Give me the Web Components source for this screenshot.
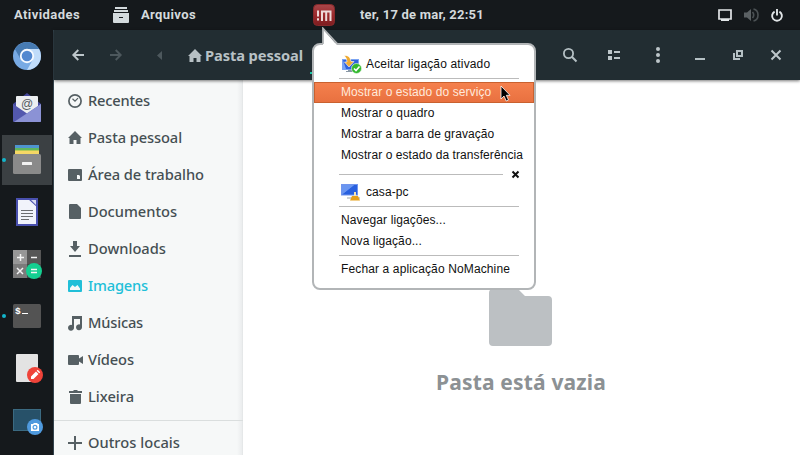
<!DOCTYPE html>
<html lang="pt">
<head>
<meta charset="utf-8">
<title>Arquivos</title>
<style>
html,body{margin:0;width:800px;height:455px;overflow:hidden;background:#fff}
</style>
</head>
<body>
<desktop-shell></desktop-shell>
<script>
const define = (name, html, after) => customElements.define(name, class extends HTMLElement {
  constructor() {
    super();
    const t = document.createElement('template');
    t.innerHTML = html;
    this.attachShadow({mode: 'open'}).append(t.content.cloneNode(true));
  }
  connectedCallback() { if (after) after(this); }
});

/* Single-line label; "w" sets the measured run length through letter spacing. */
define('text-run', `<style>:host{display:inline-block;white-space:pre;flex:none}span{display:inline-block}</style><span><slot></slot></span>`, el => {
  const w = +el.getAttribute('w');
  if (!w) return;
  const s = el.shadowRoot.querySelector('span');
  requestAnimationFrame(() => {
    s.style.letterSpacing = '0';
    const n = el.textContent.length;
    s.style.letterSpacing = ((w - s.getBoundingClientRect().width) / n).toFixed(3) + 'px';
  });
});

const icons = {
  files: [16,16,'<path fill="#d3dadd" d="M2 0h12v2H2zM1 3h14v2H1zM0 6h16v9q0 1-1 1H1q-1 0-1-1z"/><path fill="#161a1d" d="M6 10h4v1H6z"/>'],
  nm: [22,22,'<defs><linearGradient id="g" x2="0" y2="1"><stop stop-color="#a8474a"/><stop offset=".5" stop-color="#9c2a2d"/><stop offset="1" stop-color="#7e1d20"/></linearGradient></defs><rect x=".5" y=".5" width="21" height="21" rx="4" fill="url(#g)" stroke="#87292b"/><path fill="none" stroke="#eed9d9" stroke-width="2" d="M5 6.500v6M5 14.300v2.200M9 17V7.500h8.500V17M13.200 7.500V17"/>'],
  screen: [14,12,'<path fill="none" stroke="#e2e6e8" stroke-width="1.700" d="M1 1h12v9H1z"/><path fill="#e2e6e8" d="M3 10h8v2H3z"/>'],
  sound: [16,14,'<path fill="#5b6164" d="M0 4.500h3L7 1v12L3 9.500H0z"/><path fill="none" stroke="#4b5154" stroke-width="1.600" d="M8.500 4q2.500 3 0 6M9.500 1q4.500 1 4.500 6t-4.500 6"/>'],
  power: [12,13,'<path fill="none" stroke="#e0e4e6" stroke-width="1.900" d="M6 0v6.500M3.600 2.600a4.900 4.900 0 1 0 4.800 0"/>'],
  back: [12,12,'<path fill="none" stroke="#bdc6ca" stroke-width="1.900" d="M12 6H1.500M6.300 1L1.300 6l5 5"/>'],
  fwd: [12,12,'<path fill="none" stroke="#4d585d" stroke-width="1.900" d="M0 6h10.500M5.700 1l5 5-5 5"/>'],
  tri: [5,9,'<path fill="#4d585d" d="M5 0v9L0 4.500z"/>'],
  home: [14,13,'<path fill="currentColor" d="M7 0l7 7h-1.500v6H8.500V9H5.500v4H1.500V7H0z"/>'],
  search: [14,14,'<circle cx="5.500" cy="5.500" r="4.600" fill="none" stroke="#b5c0c4" stroke-width="1.800"/><path stroke="#b5c0c4" stroke-width="2" d="M8.800 8.800l4.700 4.700"/>'],
  list: [12,10,'<path fill="#bdc6ca" d="M0 0h4v4H0zM0 6h4v4H0zM6 1h6v2H6zM6 7h6v2H6z"/>'],
  dots: [4,16,'<g fill="#bdc6ca"><circle cx="2" cy="2" r="2"/><circle cx="2" cy="8" r="2"/><circle cx="2" cy="14" r="2"/></g>'],
  min: [10,10,'<path fill="#b5c0c4" d="M0 8h10v2H0z"/>'],
  max: [10,10,'<path fill="none" stroke="#b5c0c4" stroke-width="2" d="M4 1h5v5H4zM1 3v6h6"/>'],
  close: [10,10,'<path stroke="#bdc6ca" stroke-width="2" d="M.5.5l9 9M9.500.5l-9 9"/>'],
  clock: [14,14,'<circle cx="7" cy="7" r="6.100" fill="none" stroke="#566064" stroke-width="1.700"/><path fill="none" stroke="#566064" stroke-width="1.200" d="M4.500 4.800L7 7.200l3-3"/>'],
  desk: [14,12,'<rect width="14" height="12" rx="1" fill="#566064"/><path fill="#f6f8f8" d="M9 6h2l1 1v3H9z"/>'],
  doc: [12,15,'<path fill="#566064" d="M1 0h7l4 4v10q0 1-1 1H1q-1 0-1-1V1q0-1 1-1z"/>'],
  down: [12,16,'<path fill="#566064" d="M4 0h4v5h3L6 11 1 5h3zM0 14h12v2H0z"/>'],
  image: [14,12,'<rect width="14" height="12" rx="1" fill="#21bfd8"/><path fill="#f6f8f8" d="M2 10V8l2.500-3L7 7l2.500-2L12 8.500V10z"/>'],
  music: [14,14,'<path fill="#566064" d="M4 0h10v11a3 3 0 1 1-2-2.500V3H6v8.500A3 3 0 1 1 4 9z"/>'],
  video: [15,10,'<path fill="#566064" d="M1 0h9q1 0 1 1v2.500L15 1v8l-4-2.500V9q0 1-1 1H1Q0 10 0 9V1q0-1 1-1z"/>'],
  trash: [13,14,'<path fill="#566064" d="M4.500 0h4v1H13v2H0V1h4.500zM1 4h11v9q0 1-1 1H2q-1 0-1-1z"/>'],
  plus: [14,14,'<path fill="#566064" d="M6 0h2v6h6v2H8v6H6V8H0V6h6z"/>'],
  chromium: [28,28,'<circle cx="14" cy="14" r="14" fill="#78aae4"/><path fill="#477bb3" d="M1.900 7A14 14 0 0 1 26.100 7H14L7.500 17z"/><path fill="#c0dcfa" d="M26.100 7A14 14 0 0 1 14 28l6-10.500Q22 12 14 7z"/><circle cx="14" cy="14" r="7.200" fill="#f5f9ff"/><circle cx="14" cy="14" r="5.300" fill="#5288d0"/>'],
  mail: [28,29,'<path fill="#43479b" d="M0 11L14 0l14 11v9H0z"/><rect x="3" y="3" width="22" height="20" rx="1" fill="#eceff1"/><path fill="#5358ae" d="M0 11l14 9.500L28 11v17q0 1-1 1H1q-1 0-1-1z"/><path fill="#8b92d5" d="M28 11v17q0 1-1 1H1z"/><text x="14" y="15" text-anchor="middle" font-family="Liberation Sans" font-size="12" fill="#555b5f">@</text>'],
  cabinet: [28,29,'<path fill="#4f94cf" d="M2 0h24v4H2z"/><path fill="#5fb65e" d="M2 3h24v4H2z"/><path fill="#b4c954" d="M2 5h24v2H2z"/><path fill="#f5d765" d="M2 6h24v4H2z"/><rect y="9" width="28" height="20" rx="1.500" fill="#8a8a8a"/><rect x="9" y="17" width="10" height="3" rx=".5" fill="#f2f2f2"/>'],
  writer: [22,28,'<path fill="#f1f3fb" stroke="#4950ae" stroke-width="2" d="M1 1h20v26H1z"/><path fill="#4950ae" d="M11 0h11v10z"/><path fill="#d7daf0" d="M15 2h5v5z"/><path stroke="#6b6d72" d="M5 12.500h12M5 15.500h12M5 18.500h12M5 21.500h8"/>'],
  calc: [29,29,'<path fill="#979797" d="M0 0h14v14H0z"/><path fill="#565656" d="M14 0h14v14H14z"/><path fill="#7b7b7b" d="M0 14h14v14H0z"/><path fill="#484848" d="M14 14h14v14H14z"/><circle cx="21" cy="21" r="8" fill="#14cf91"/><path stroke="#f4f4f4" stroke-width="1.500" d="M4 7.500h7M7.500 4v7M18 7.500h6M4 18l6 6M10 18l-6 6M18 19.500h6M18 22.500h6"/>'],
  term: [28,24,'<rect width="28" height="24" rx="1.500" fill="#535353"/><text x="2" y="10" font-family="Liberation Mono" font-weight="bold" font-size="9.500" fill="#fff">$</text><path fill="#fff" d="M9 9h6v1H9z"/>'],
  edit: [27,29,'<rect width="22" height="28" rx="1" fill="#e3e3e3"/><circle cx="19" cy="21" r="8" fill="#ef4339"/><path fill="#fff" d="M15 25v-2.500l5-5 2.500 2.500-5 5zM20.700 16.800l1-1 2.500 2.500-1 1z"/>'],
  shot: [30,26,'<rect x=".5" y=".5" width="27" height="21" fill="#275169" stroke="#3b6a81"/><circle cx="22" cy="18" r="8" fill="#4f9ade"/><path fill="#fff" d="M18 15h2l1-1h3l1 1h1v7h-8z"/><circle cx="22" cy="18.300" r="1.900" fill="none" stroke="#4f9ade" stroke-width="1.200"/>'],
  accept: [21,19,'<rect x="1" y="4" width="17" height="11" fill="#7ba4f2"/><path fill="#2f62dd" d="M2 5h15v9H5z"/><path fill="#8a98a6" d="M7 15h5v1h2v1H5v-1h2z"/><path fill="#efaa31" stroke="#fff" stroke-width=".6" d="M3 .5q6-1 7 6h3L8 12 3.500 7H6Q6 3 3 .5z"/><circle cx="15.500" cy="13.500" r="5" fill="#31b82d" stroke="#dcf3dc" stroke-width=".7"/><path fill="none" stroke="#fff" stroke-width="1.600" d="M13 13.500l2 2 3.500-4"/>'],
  pc: [20,17,'<rect width="17" height="11.500" fill="#7195ed"/><path fill="#2860df" d="M1 10.500L13 1h3v9.500z"/><path fill="#6a96f1" d="M1 1h12L1 10.500z"/><path fill="#9aa2aa" d="M6 13.500h13v1H6z"/><path fill="#f7e6b5" d="M13 8h2v4h-2z"/><path fill="#e6a11c" d="M11 12h6l2 4.500H9z"/>'],
  x: [7,7,'<path stroke="#111" stroke-width="2" d="M.5.5l6 6M6.500.5l-6 6"/>'],
  folder: [64,64,'<path fill="#bcc0c3" d="M4 0h25l7 7h23q4 0 4 4v42q0 4-4 4H4q-4 0-4-4V4q0-4 4-4z"/>'],
  cursor: [10,17,'<path fill="#000" stroke="#fff" stroke-width=".8" d="M1 1v13l3-3 2.200 5L8.500 15 6.300 10.300H10z"/>']
};

define('ui-icon', `<style>:host{display:block;flex:none}svg{display:block;overflow:visible}</style><div></div>`, el => {
  const [w, h, body] = icons[el.getAttribute('name')];
  el.shadowRoot.querySelector('div').innerHTML = `<svg width="${w}" height="${h}" viewBox="0 0 ${w} ${h}">${body}</svg>`;
});

define('top-bar', `<style>
:host{display:flex;align-items:center;height:30px;background:#15191c;color:#d4dadd;font:700 13px/30px Roboto,sans-serif;box-sizing:border-box;padding:0 17px 0 14px}
.files{margin:0 12px 0 33px}.nm{margin:0 25px 0 117px}.s{margin-left:auto}.v{margin:0 11px 0 12px}
</style>
<text-run w="66">Atividades</text-run><ui-icon class="files" name="files"></ui-icon><text-run w="55">Arquivos</text-run>
<ui-icon class="nm" name="nm"></ui-icon><text-run w="124">ter, 17 de mar, 22:51</text-run>
<ui-icon class="s" name="screen"></ui-icon><ui-icon class="v" name="sound"></ui-icon><ui-icon name="power"></ui-icon>`);

define('dock-item', `<style>
:host{display:flex;align-items:center;justify-content:center;position:relative;width:50px;height:50px;margin:0 0 2px 2px}
:host([active]){background:#3b4043}
:host([running])::before{content:"";position:absolute;left:0;top:23px;width:4px;height:4px;border-radius:50%;background:#12b5cb}
</style><slot></slot>`);

define('app-dock', `<style>:host{display:block;width:53px;height:425px;box-sizing:content-box;background:#15191c;border-right:1px solid #34444d;flex:none}
.list{padding-top:1px}.up{margin-bottom:1px}.calc{margin:0 0 -1px 1px}.edit{margin:0 0 -1px 5px}.shot{margin:0 0 -4px 2px}</style>
<div class="list">
<dock-item><ui-icon name="chromium"></ui-icon></dock-item>
<dock-item><ui-icon name="mail" class="up"></ui-icon></dock-item>
<dock-item active running><ui-icon name="cabinet" class="up"></ui-icon></dock-item>
<dock-item><ui-icon name="writer"></ui-icon></dock-item>
<dock-item><ui-icon name="calc" class="calc"></ui-icon></dock-item>
<dock-item running><ui-icon name="term"></ui-icon></dock-item>
<dock-item><ui-icon name="edit" class="edit"></ui-icon></dock-item>
<dock-item><ui-icon name="shot" class="shot"></ui-icon></dock-item>
</div>`);

define('header-bar', `<style>
:host{display:flex;align-items:center;height:50px;box-sizing:border-box;padding:0 19px 0 18px;background:#222d32;color:#b8c1c5;font:700 14.67px/50px "Noto Sans",sans-serif;box-shadow:0 1px 3px #0008;position:relative;z-index:1}
.f{margin-left:26px}.t{margin-left:35px}.h{margin:0 3px 0 26px}
.tab{display:flex;align-items:center;height:50px}
.u{width:12px;height:2px;background:#16c6a4;align-self:flex-end;margin:0 0 6px 7px}
.s{margin-left:auto}.l{margin-left:31px}.d{margin-left:36px}.m{margin-left:35px}.x{margin-left:28px}
</style>
<ui-icon name="back"></ui-icon><ui-icon class="f" name="fwd"></ui-icon><ui-icon class="t" name="tri"></ui-icon>
<div class="tab"><ui-icon class="h" name="home"></ui-icon><text-run w="98">Pasta pessoal</text-run><div class="u"></div></div>
<ui-icon class="s" name="search"></ui-icon><ui-icon class="l" name="list"></ui-icon><ui-icon class="d" name="dots"></ui-icon>
<ui-icon class="m" name="min"></ui-icon><ui-icon class="x" name="max"></ui-icon><ui-icon class="x" name="close"></ui-icon>`);

define('place-row', `<style>
:host{display:flex;align-items:center;height:37px;padding-left:14px;color:#454f53}
:host([active]){color:#21bfd8}
.i{width:14px;display:flex;justify-content:center;margin-right:6px;color:#566064}
</style><span class="i"><slot name="icon"></slot></span><slot></slot>`);

const places = [['clock','Recentes',62],['home','Pasta pessoal',94],['desk','Área de trabalho',116],['doc','Documentos',89],['down','Downloads',78],['image','Imagens',60],['music','Músicas',55],['video','Vídeos',46],['trash','Lixeira',46]];
const row = ([i, t, w]) => `<place-row${t === 'Imagens' ? ' active' : ''}><ui-icon slot="icon" name="${i}"></ui-icon><text-run w="${w}">${t}</text-run></place-row>`;
define('places-sidebar', `<style>:host{display:block;flex:none;width:189px;box-sizing:border-box;height:375px;padding-top:2px;overflow:hidden;background:linear-gradient(90deg,#f6f8f8 183px,#ebedee 188px,#dfe2e3);font:500 14.67px/37px "Noto Sans",sans-serif}
hr{border:0;height:1px;background:#dadede;margin:5px 0 3px}</style>${places.map(row).join('')}<hr>${row(['plus','Outros locais',92])}`);

define('empty-folder', `<style>:host{display:flex;flex-direction:column;align-items:center;flex:1;background:#fff;padding:209px 1px 0 0;box-sizing:border-box;color:#8c9194;font:700 21px/30px "Noto Sans",sans-serif}
text-run{margin-top:14px}ui-icon{height:64px}</style>
<ui-icon name="folder"></ui-icon><text-run w="170">Pasta está vazia</text-run>`);

define('file-window', `<style>:host{display:block;flex:1}.b{display:flex;height:375px}</style>
<header-bar></header-bar><div class="b"><places-sidebar></places-sidebar><empty-folder></empty-folder></div>`);

define('menu-item', `<style>
:host{display:flex;align-items:center;height:21px;padding-left:27px;box-sizing:border-box}
:host([hot]){background:linear-gradient(#f5814e,#e8703f);box-shadow:inset 0 0 0 1px #c9612f;color:#ffe9dc}
:host([tall]){height:28px;margin-top:5px}
:host([host]){height:18px;margin-bottom:5px}
::slotted(ui-icon){width:25px}
</style><slot></slot>`);
define('menu-rule', `<style>:host{display:flex;align-items:center;margin:0 15px 3px 25px}
i{height:1px;background:#bbb;flex:1}:host([gap]){margin-top:3px}:host([closable]){height:17px;margin-bottom:0}
::slotted(*){margin-left:9px}</style><i></i><slot></slot>`);

define('tray-menu', `<style>
:host{display:block;position:absolute;left:312px;top:43px;width:224px;height:247px;box-sizing:border-box;border:2px solid #b2b5b7;border-radius:8px;background:#fff;color:#111;font:12px/21px "Liberation Sans",Arial,sans-serif;z-index:5}
.tail{position:absolute;left:7px;top:-18px}
.cur{position:absolute;left:186px;top:40px}
</style>
<svg class="tail" width="20" height="19"><path fill="#fff" d="M2 18V2l14 16z"/><path fill="none" stroke="#b2b5b7" stroke-width="1.800" d="M2 17V1.500L16.500 17"/></svg>
<menu-item tall><ui-icon name="accept"></ui-icon><text-run w="124.300">Aceitar ligação ativado</text-run></menu-item>
<menu-rule></menu-rule>
<menu-item hot><text-run w="150.300">Mostrar o estado do serviço</text-run></menu-item>
<menu-item><text-run w="93.500">Mostrar o quadro</text-run></menu-item>
<menu-item><text-run w="153.300">Mostrar a barra de gravação</text-run></menu-item>
<menu-item><text-run w="182">Mostrar o estado da transferência</text-run></menu-item>
<menu-rule closable><ui-icon name="x"></ui-icon></menu-rule>
<menu-item host><ui-icon name="pc"></ui-icon><text-run w="42.700">casa-pc</text-run></menu-item>
<menu-rule></menu-rule>
<menu-item><text-run w="105">Navegar ligações...</text-run></menu-item>
<menu-item><text-run w="81">Nova ligação...</text-run></menu-item>
<menu-rule gap></menu-rule>
<menu-item><text-run w="169">Fechar a aplicação NoMachine</text-run></menu-item>
<ui-icon class="cur" name="cursor"></ui-icon>`);

define('desktop-shell', `<style>:host{display:block;position:relative;width:800px;height:455px;overflow:hidden}.m{display:flex}</style>
<top-bar></top-bar><div class="m"><app-dock></app-dock><file-window></file-window></div><tray-menu></tray-menu>`);
</script>
</body>
</html>
